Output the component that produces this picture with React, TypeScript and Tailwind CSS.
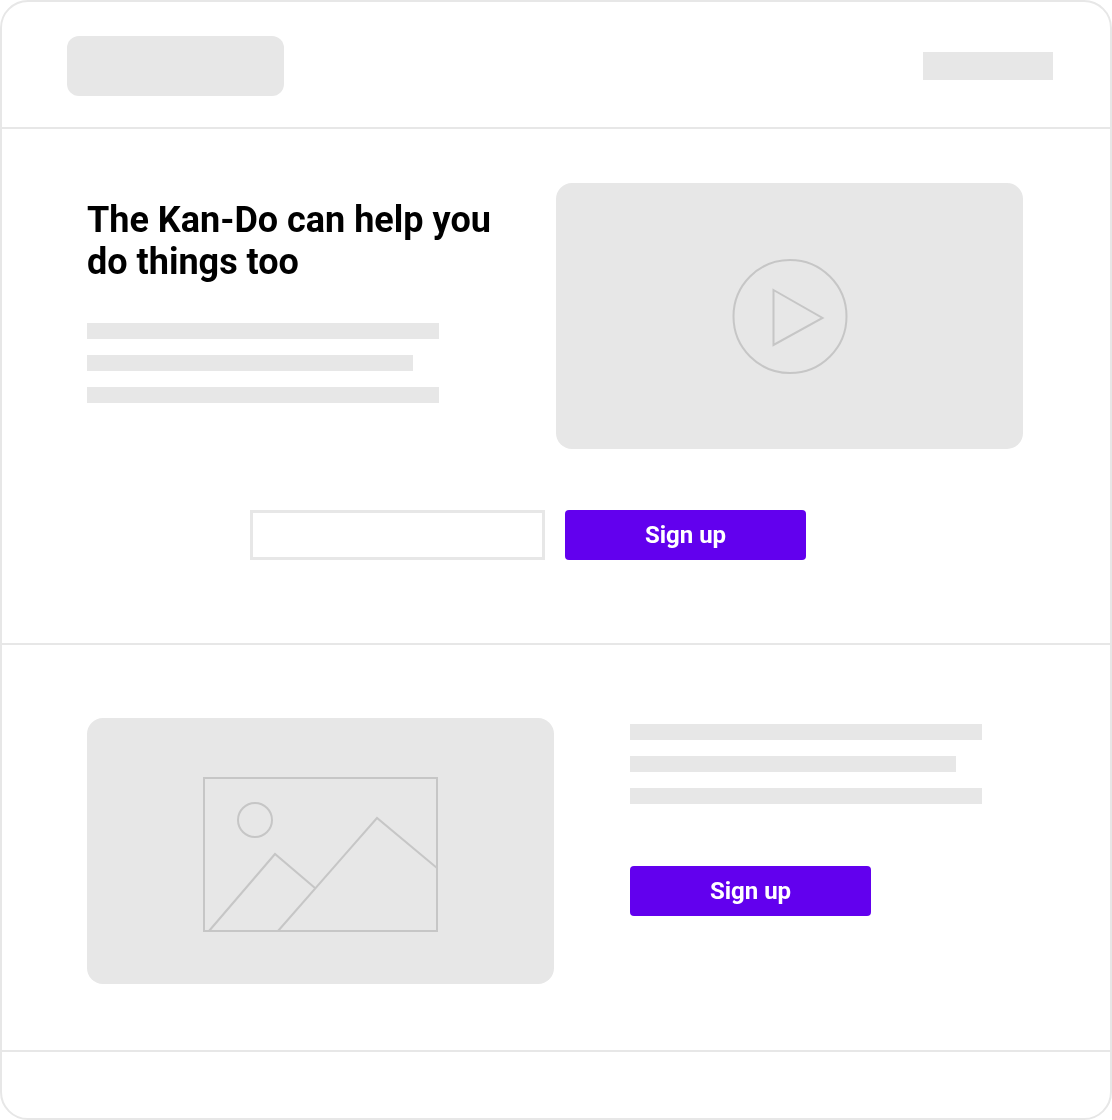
function TextLines() {
  return (
    <div className="flex flex-col gap-4">
      <div className="h-4 w-[352px] bg-[#e7e7e7]" />
      <div className="h-4 w-[326px] bg-[#e7e7e7]" />
      <div className="h-4 w-[352px] bg-[#e7e7e7]" />
    </div>
  );
}

function SignUpButton() {
  return (
    <button
      type="button"
      className="flex h-[50px] w-[241px] items-center justify-center rounded bg-[#6200ee] text-[24px] font-bold text-white"
    >
      Sign up
    </button>
  );
}

function PlayIcon() {
  return (
    <svg width="116" height="118" viewBox="0 0 116 118" fill="none" stroke="#c6c6c6" strokeWidth="2">
      <circle cx="58" cy="59.5" r="56.5" />
      <path d="M41.5 33 L90.5 61 L41.5 88 Z" />
    </svg>
  );
}

function ImageIcon() {
  return (
    <svg className="mt-1.5" width="235" height="155" viewBox="0 0 235 155" fill="none" stroke="#c6c6c6" strokeWidth="2">
      <rect x="1" y="1" width="233" height="153" />
      <circle cx="52" cy="43" r="17" />
      <path d="M6 154 L72 77 L112 111" />
      <path d="M75 154 L174 41 L234 91" />
    </svg>
  );
}

export default function App() {
  return (
    <div className="h-[1120px] w-[1112px] overflow-hidden rounded-[28px] border-2 border-[#e7e7e7] font-['Roboto',sans-serif] antialiased will-change-transform">
      <header className="flex h-[127px] items-start justify-between border-b-2 border-[#e7e7e7] pl-[65px] pr-[57px] pt-[34px]">
        <div className="h-[60px] w-[217px] rounded-xl bg-[#e7e7e7]" />
        <div className="mt-4 h-7 w-[130px] bg-[#e7e7e7]" />
      </header>

      <section className="h-[516px] border-b-2 border-[#e7e7e7] pl-[85px] pr-[87px] pt-[54px]">
        <div className="flex justify-between">
          <div className="pt-4">
            <h1 className="text-[36px] leading-[42px] font-bold text-black">
              The Kan-Do can help you
              <br />
              do things too
            </h1>
            <div className="mt-10">
              <TextLines />
            </div>
          </div>
          <div className="flex h-[266px] w-[467px] items-center justify-center rounded-2xl bg-[#e7e7e7]">
            <PlayIcon />
          </div>
        </div>
        <div className="ml-[163px] mt-[61px] flex gap-5">
          <div className="h-[50px] w-[295px] border-[3px] border-[#e7e7e7]" />
          <SignUpButton />
        </div>
      </section>

      <section className="flex h-[407px] border-b-2 border-[#e7e7e7] pl-[85px] pt-[73px]">
        <div className="flex h-[266px] w-[467px] items-center justify-center rounded-2xl bg-[#e7e7e7]">
          <ImageIcon />
        </div>
        <div className="ml-[76px] pt-[6px]">
          <TextLines />
          <div className="mt-[62px]">
            <SignUpButton />
          </div>
        </div>
      </section>
    </div>
  );
}
